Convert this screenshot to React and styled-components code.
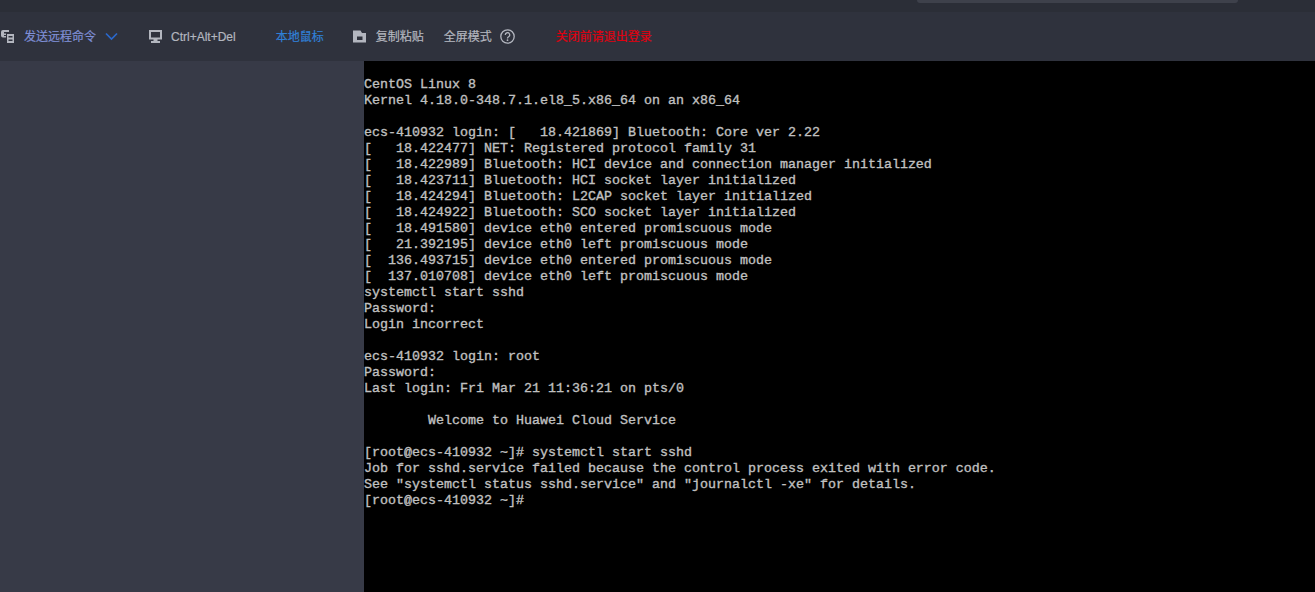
import React from 'react';
import styled, { createGlobalStyle } from 'styled-components';

const GlobalStyle = createGlobalStyle`
  html, body {
    margin: 0;
    padding: 0;
    height: 100%;
    overflow: hidden;
    background: #373a47;
  }
`;

const Page = styled.div`
  width: 1315px;
  height: 592px;
  display: flex;
  flex-direction: column;
  overflow: hidden;
`;

const Header = styled.div`
  height: 61px;
  flex: none;
  display: flex;
  flex-direction: column;
  background: #2f323d;
`;

const TopStrip = styled.div`
  height: 12px;
  display: flex;
  justify-content: flex-end;
  padding-right: 77px;
  background: #2b2e37;
`;

const TopTab = styled.div`
  width: 321px;
  height: 3px;
  background: #3e414b;
  border-radius: 0 0 6px 6px;
`;

const Toolbar = styled.div`
  flex: 1;
  display: flex;
  align-items: center;
  padding-left: 1px;
  font-family: "Liberation Sans", "Noto Sans CJK SC", sans-serif;
  font-size: 12px;
  color: #b3b6bf;
`;

const Label = styled.span`
  margin-left: ${p => p.$left || 0}px;
  color: ${p => p.$color || '#b3b6bf'};
  white-space: nowrap;
  line-height: 16px;
  -webkit-text-stroke: 0.2px currentColor;
`;

const Icon = styled.svg`
  flex: none;
  width: ${p => p.$size || 13}px;
  height: ${p => p.$size || 13}px;
  margin-left: ${p => p.$left || 0}px;
`;

const Body = styled.div`
  flex: 1;
  display: flex;
`;

const Sidebar = styled.div`
  width: 364px;
  flex: none;
  background: #373a47;
`;

const Terminal = styled.pre`
  flex: 1;
  margin: 0;
  padding-top: 16px;
  background: #000;
  color: #c0c0c0;
  font-family: "Liberation Mono", "DejaVu Sans Mono", monospace;
  font-size: 13.333px;
  line-height: 16px;
  overflow: hidden;
  -webkit-text-stroke: 0.35px #c0c0c0;
  -webkit-font-smoothing: antialiased;
`;

const lines = `CentOS Linux 8
Kernel 4.18.0-348.7.1.el8_5.x86_64 on an x86_64

ecs-410932 login: [   18.421869] Bluetooth: Core ver 2.22
[   18.422477] NET: Registered protocol family 31
[   18.422989] Bluetooth: HCI device and connection manager initialized
[   18.423711] Bluetooth: HCI socket layer initialized
[   18.424294] Bluetooth: L2CAP socket layer initialized
[   18.424922] Bluetooth: SCO socket layer initialized
[   18.491580] device eth0 entered promiscuous mode
[   21.392195] device eth0 left promiscuous mode
[  136.493715] device eth0 entered promiscuous mode
[  137.010708] device eth0 left promiscuous mode
systemctl start sshd
Password:
Login incorrect

ecs-410932 login: root
Password:
Last login: Fri Mar 21 11:36:21 on pts/0

        Welcome to Huawei Cloud Service

[root@ecs-410932 ~]# systemctl start sshd
Job for sshd.service failed because the control process exited with error code.
See "systemctl status sshd.service" and "journalctl -xe" for details.
[root@ecs-410932 ~]#`;

export default function App() {
  return (
    <Page>
      <GlobalStyle />
      <Header>
        <TopStrip>
          <TopTab />
        </TopStrip>
        <Toolbar>
          <Icon viewBox="0 0 13 13">
            <path fill="#b3b6bf" d="M2 0h6v2H3v1.500h2V5H3v1h2v1.500H2a2 2 0 0 1-2-2V2a2 2 0 0 1 2-2z" />
            <path fill="#b3b6bf" fillRule="evenodd" d="M6 4h7v9H6zM7.500 6v1.500h4V6zM7.500 9.500v1.500h4V9.500z" />
          </Icon>
          <Label $left={10} $color="#7f8fd6">发送远程命令</Label>
          <Icon $left={9} viewBox="0 0 13 13">
            <path d="M1 3.500l5.500 5.500 5.500-5.500" fill="none" stroke="#2a68cc" strokeWidth="1.700" />
          </Icon>
          <Icon $left={31} viewBox="0 0 13 13">
            <path fill="#b3b6bf" fillRule="evenodd" d="M0 0h13v9.500H8.500V11H11v2H2v-2h2.500V9.500H0zM2 2v5.500h9V2z" />
          </Icon>
          <Label $left={9}>Ctrl+Alt+Del</Label>
          <Label $left={40} $color="#2f80d8">本地鼠标</Label>
          <Icon $left={29} viewBox="0 0 13 13">
            <path fill="#b3b6bf" fillRule="evenodd" d="M0 .500h7.500L9 3h4v9.500H0zM4 6.500h5.500v3.500H4z" />
          </Icon>
          <Label $left={10}>复制粘贴</Label>
          <Label $left={20}>全屏模式</Label>
          <Icon $size={15} $left={8} viewBox="0 0 15 15">
            <circle cx="7.500" cy="7.500" r="6.700" fill="none" stroke="#b3b6bf" strokeWidth="1.300" />
            <path d="M5.300 6a2.200 2.200 0 1 1 3.300 1.800c-.8.500-1.100.8-1.100 1.600" fill="none" stroke="#b3b6bf" strokeWidth="1.300" />
            <circle cx="7.500" cy="11.200" r=".9" fill="#b3b6bf" />
          </Icon>
          <Label $left={41} $color="#e0000f">关闭前请退出登录</Label>
        </Toolbar>
      </Header>
      <Body>
        <Sidebar />
        <Terminal>{lines}</Terminal>
      </Body>
    </Page>
  );
}
